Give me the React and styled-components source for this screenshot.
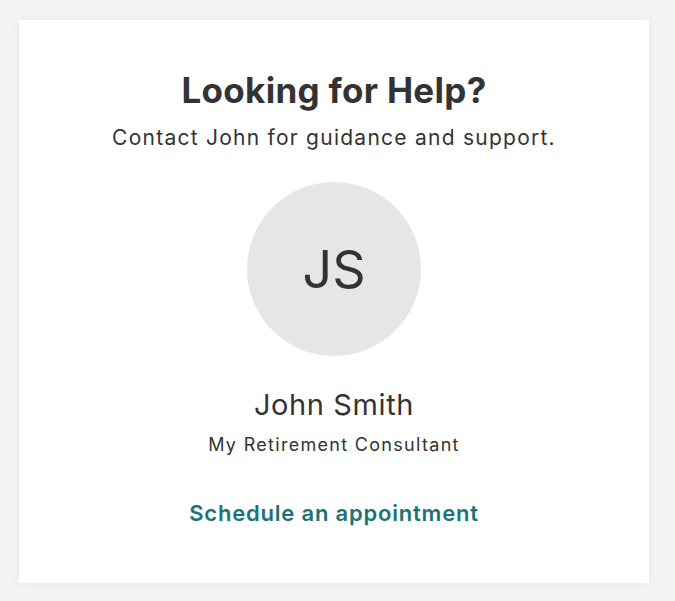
import React from "react";
import styled, { createGlobalStyle } from "styled-components";

const Global = createGlobalStyle`
  html, body { margin: 0; padding: 0; background: #f4f4f6; }
  body { font-family: Inter, "Noto Sans", sans-serif; color: #333; }
`;

const Page = styled.div`
  padding: 20px 26px 18px 19px;
  min-height: 601px;
  box-sizing: border-box;
`;

const Card = styled.section`
  width: 630px;
  height: 563px;
  box-sizing: border-box;
  background: #fff;
  box-shadow: 0 0 10px rgba(30, 30, 60, 0.06);
  display: flex;
  flex-direction: column;
  align-items: center;
  padding-top: 50px;
`;

const Title = styled.h2`
  margin: 0;
  font-size: 35px;
  font-weight: 700;
  line-height: 40px;
  letter-spacing: 0.3px;
  color: #333;
`;

const Subtitle = styled.p`
  margin: 14px 0 0;
  font-size: 21px;
  line-height: 28px;
  letter-spacing: 1.25px;
  color: #333;
`;

const Avatar = styled.div`
  margin-top: 30px;
  width: 174px;
  height: 174px;
  border-radius: 50%;
  background: #e6e6e6;
  display: flex;
  align-items: center;
  justify-content: center;
  font-size: 52px;
  color: #333;
`;

const Name = styled.div`
  margin-top: 31px;
  font-size: 29px;
  line-height: 36px;
  letter-spacing: 0.6px;
`;

const Role = styled.div`
  margin-top: 10px;
  font-size: 18px;
  line-height: 24px;
  letter-spacing: 1.3px;
`;

const Link = styled.a`
  margin-top: 42px;
  font-size: 22px;
  line-height: 28px;
  font-weight: 600;
  letter-spacing: 0.8px;
  color: #1b7377;
  text-decoration: none;
`;

export default function App() {
  return (
    <>
      <Global />
      <Page>
        <Card>
          <Title>Looking for Help?</Title>
          <Subtitle>Contact John for guidance and support.</Subtitle>
          <Avatar>JS</Avatar>
          <Name>John Smith</Name>
          <Role>My Retirement Consultant</Role>
          <Link href="#">Schedule an appointment</Link>
        </Card>
      </Page>
    </>
  );
}
